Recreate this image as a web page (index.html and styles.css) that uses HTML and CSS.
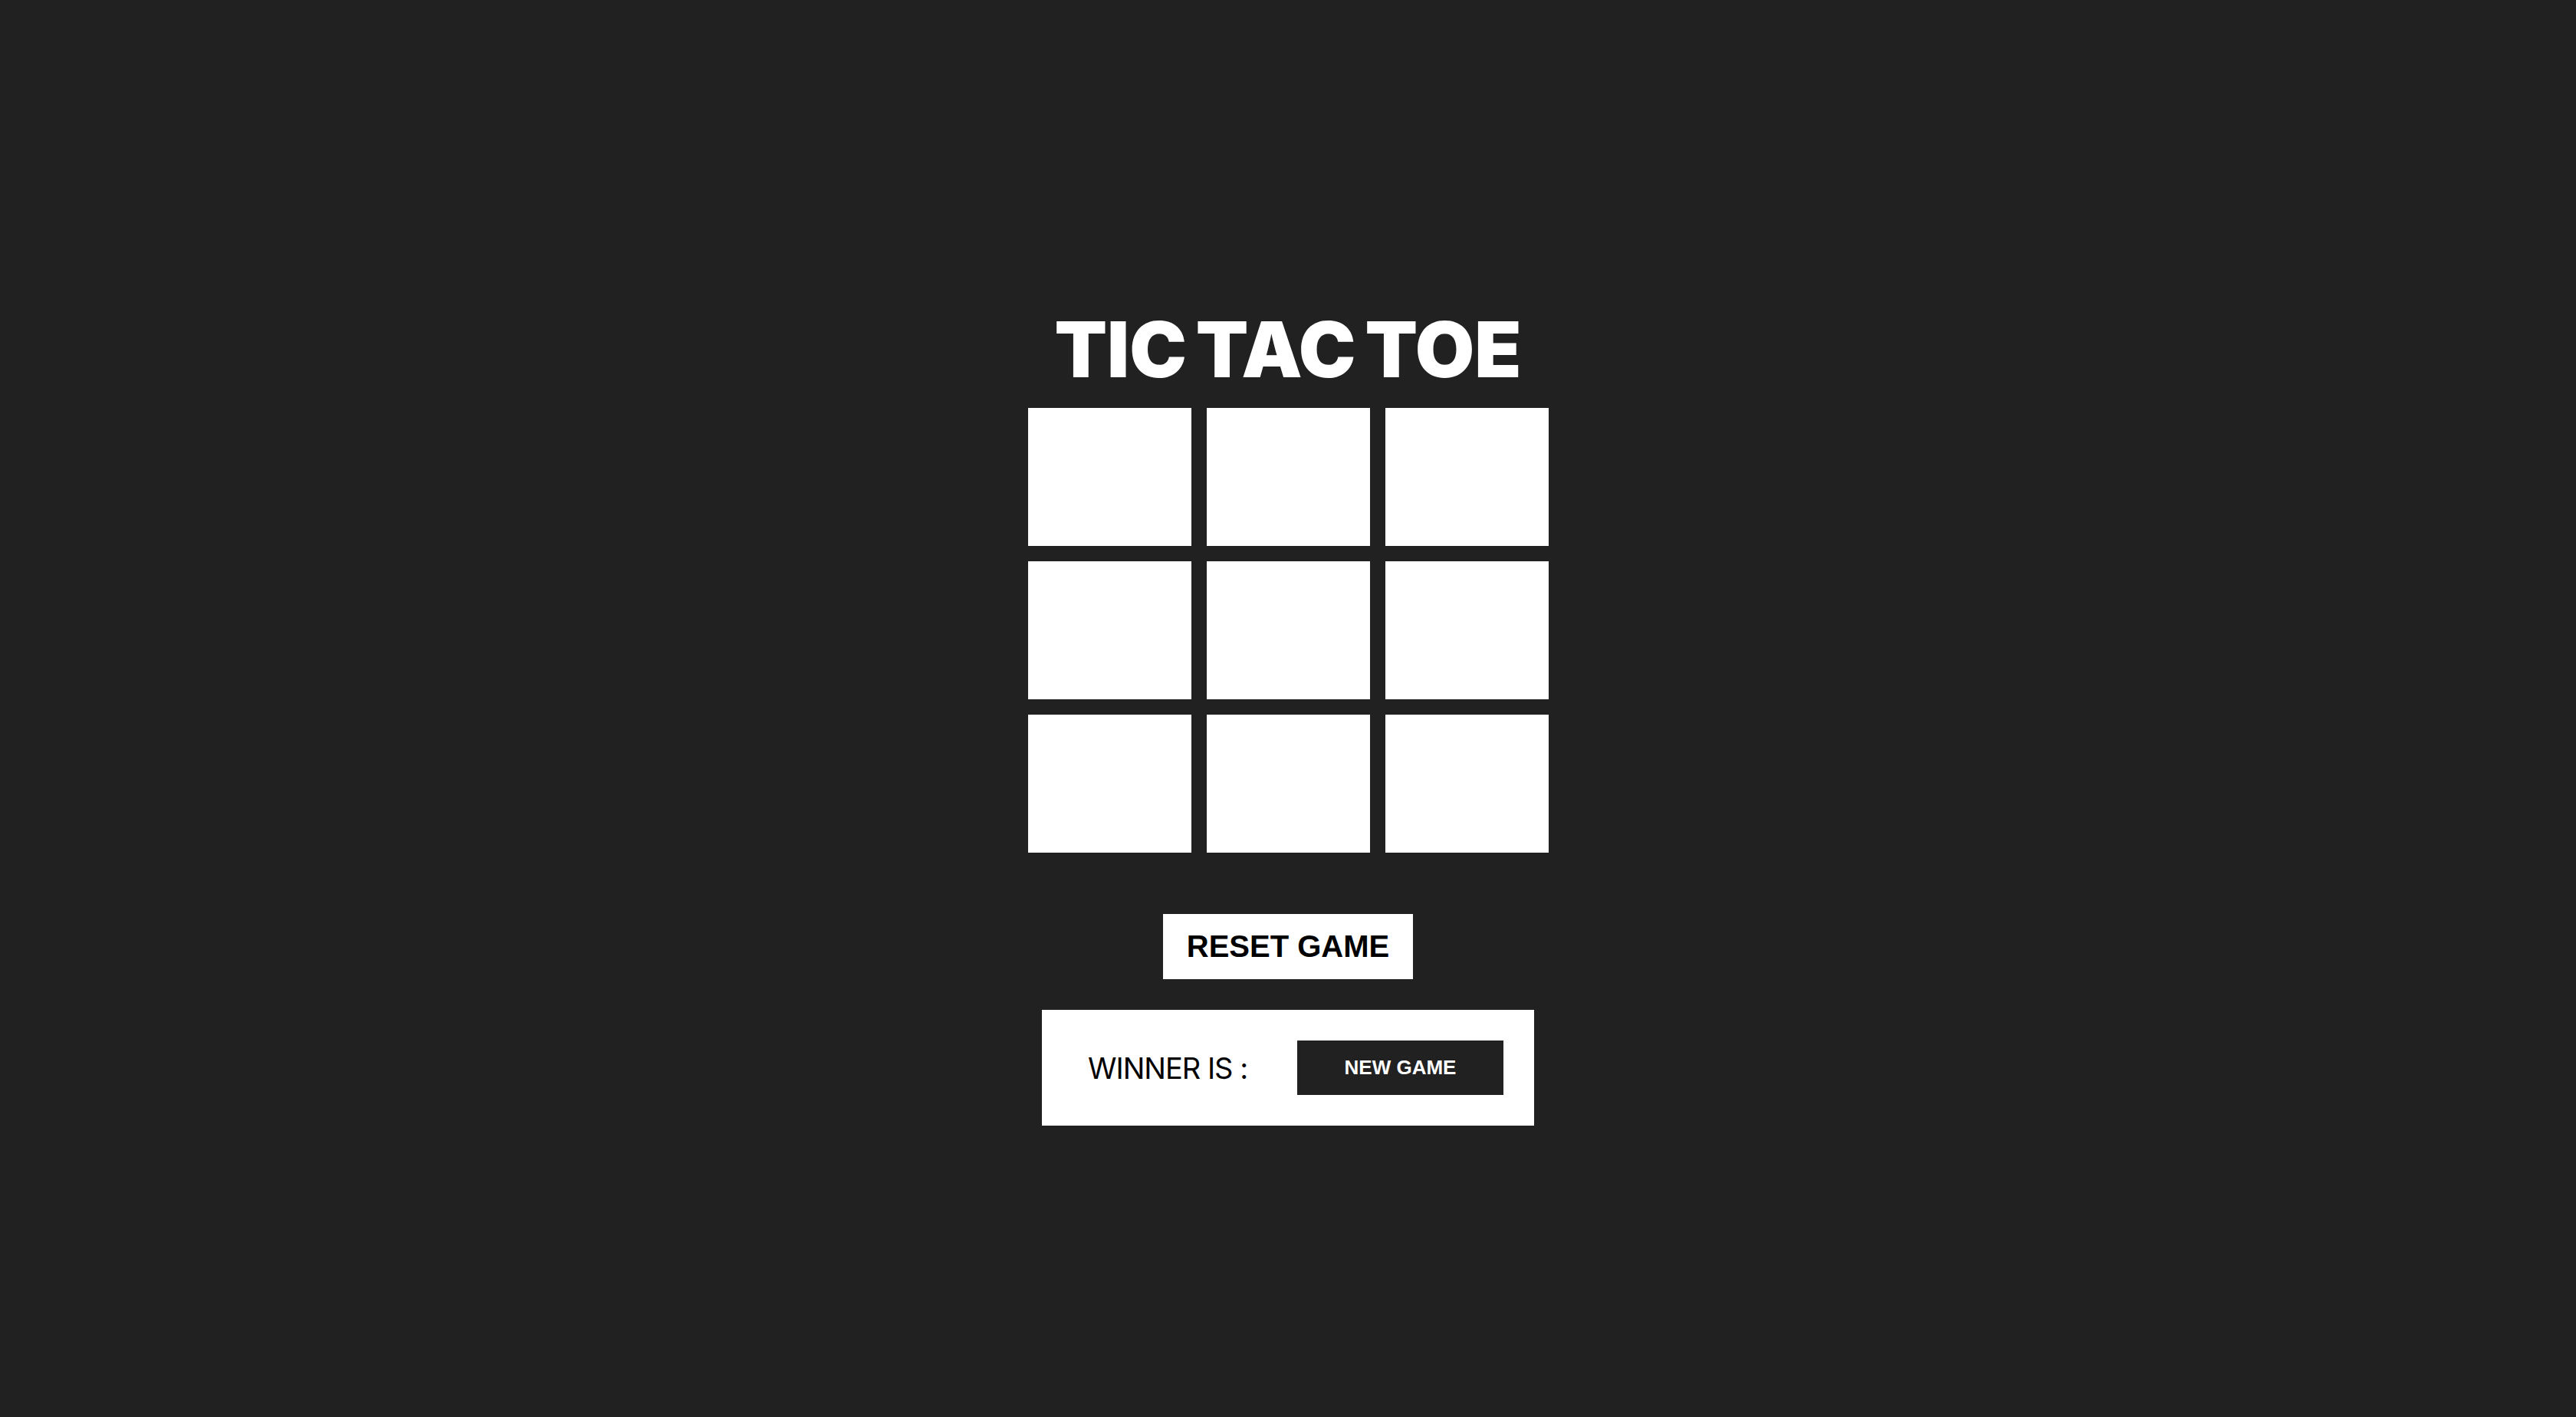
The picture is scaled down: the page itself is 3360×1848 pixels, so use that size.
FILE: index.html
```html
<!DOCTYPE html>
<html lang="en">
<head>
<meta charset="utf-8">
<title>Tic Tac Toe</title>
<link rel="stylesheet" href="styles.css">
</head>
<body>
<main class="game">
  <h1 class="title">TIC TAC TOE</h1>
  <div class="board">
    <button class="cell"></button>
    <button class="cell"></button>
    <button class="cell"></button>
    <button class="cell"></button>
    <button class="cell"></button>
    <button class="cell"></button>
    <button class="cell"></button>
    <button class="cell"></button>
    <button class="cell"></button>
  </div>
  <button class="reset">RESET GAME</button>
  <div class="result">
    <p class="winner">WINNER IS :</p>
    <button class="new-game">NEW GAME</button>
  </div>
</main>
</body>
</html>
```
FILE: styles.css
```css
* { box-sizing: border-box; }
html, body { margin: 0; padding: 0; }
body {
  background: #212121;
  min-height: 100vh;
}
.game {
  min-height: 100vh;
  display: flex;
  flex-direction: column;
  align-items: center;
  justify-content: center;
}
.title {
  margin: 0 0 16px;
  padding-top: 16px;
  font-family: Inter, "Liberation Sans", sans-serif;
  font-weight: 900;
  font-size: 100px;
  line-height: 120px;
  color: #fff;
  letter-spacing: 0;
  word-spacing: -8px;
}
.board {
  display: grid;
  grid-template-columns: repeat(3, 213px);
  grid-template-rows: repeat(3, 180px);
  gap: 20px;
}
.cell {
  border: none;
  background: #fff;
  padding: 0;
  margin: 0;
}
.reset {
  margin-top: 80px;
  height: 85px;
  padding: 0 31px;
  border: none;
  background: #fff;
  color: #000;
  font-family: "Liberation Sans", Arial, sans-serif;
  font-weight: 700;
  font-size: 40px;
}
.result {
  margin-top: 40px;
  width: 642px;
  height: 151px;
  background: #fff;
  display: flex;
  align-items: center;
  padding: 0 40px 0 60px;
  gap: 61px;
}
.winner {
  margin: 0;
  flex: 0 0 212px;
  white-space: nowrap;
  font-family: Inter, "Liberation Sans", sans-serif;
  font-weight: 400;
  font-size: 38px;
  letter-spacing: -1px;
  color: #000;
}
.new-game {
  flex: 0 0 269px;
  height: 71px;
  border: none;
  background: #212121;
  color: #fff;
  font-family: "Liberation Sans", Arial, sans-serif;
  font-weight: 700;
  font-size: 26px;
  padding: 0;
}
```
